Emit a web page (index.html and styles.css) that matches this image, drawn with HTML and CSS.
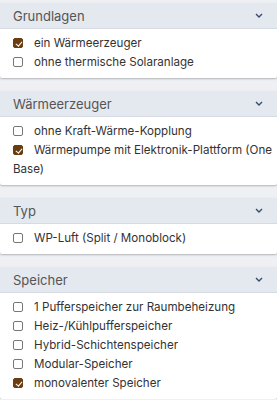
FILE: index.html
```html
<!DOCTYPE html>
<html lang="de">
<head>
<meta charset="utf-8">
<link rel="stylesheet" href="styles.css">
</head>
<body>
<div class="panel">
  <section class="card">
    <div class="card-header"><span>Grundlagen</span><svg class="chev" width="8" height="5" viewBox="0 0 8 5"><path d="M1 1l3 3 3-3" fill="none" stroke="#3a4a6a" stroke-width="1.4"/></svg></div>
    <div class="card-body">
      <label class="item"><span class="cb checked"></span><span>ein Wärmeerzeuger</span></label>
      <label class="item"><span class="cb"></span><span>ohne thermische Solaranlage</span></label>
    </div>
  </section>
  <section class="card">
    <div class="card-header"><span>Wärmeerzeuger</span><svg class="chev" width="8" height="5" viewBox="0 0 8 5"><path d="M1 1l3 3 3-3" fill="none" stroke="#3a4a6a" stroke-width="1.4"/></svg></div>
    <div class="card-body">
      <label class="item"><span class="cb"></span><span>ohne Kraft-Wärme-Kopplung</span></label>
      <label class="item wrap"><span class="cb checked"></span>Wärmepumpe mit Elektronik-Plattform (One Base)</label>
    </div>
  </section>
  <section class="card">
    <div class="card-header"><span>Typ</span><svg class="chev" width="8" height="5" viewBox="0 0 8 5"><path d="M1 1l3 3 3-3" fill="none" stroke="#3a4a6a" stroke-width="1.4"/></svg></div>
    <div class="card-body">
      <label class="item"><span class="cb"></span><span>WP-Luft (Split / Monoblock)</span></label>
    </div>
  </section>
  <section class="card">
    <div class="card-header"><span>Speicher</span><svg class="chev" width="8" height="5" viewBox="0 0 8 5"><path d="M1 1l3 3 3-3" fill="none" stroke="#3a4a6a" stroke-width="1.4"/></svg></div>
    <div class="card-body">
      <label class="item"><span class="cb"></span><span>1 Pufferspeicher zur Raumbeheizung</span></label>
      <label class="item"><span class="cb"></span><span>Heiz-/Kühlpufferspeicher</span></label>
      <label class="item"><span class="cb"></span><span>Hybrid-Schichtenspeicher</span></label>
      <label class="item"><span class="cb"></span><span>Modular-Speicher</span></label>
      <label class="item"><span class="cb checked"></span><span>monovalenter Speicher</span></label>
    </div>
  </section>
</div>
</body>
</html>
```
FILE: styles.css
```css
html, body {
  margin: 0;
  padding: 0;
  background: #eef0f4;
}
body {
  font-family: Inter, "Noto Sans", sans-serif;
  color: #333;
}
.panel {
  display: flex;
  flex-direction: column;
  gap: 13px;
  padding-top: 3px;
  width: 277px;
}
.card {
  background: #fff;
  box-shadow: 0 1px 2px rgba(0,0,0,0.25);
  border-radius: 0 0 2px 2px;
}
.card-header {
  height: 25px;
  display: flex;
  align-items: center;
  justify-content: space-between;
  padding: 0 14px 0 13px;
  background: #e4e8ef;
  border-bottom: 1px solid #d6dbe3;
  font-size: 13px;
  color: #555;
}
.card-body {
  padding: 5px 0 6px 13px;
  display: flex;
  flex-direction: column;
}
.item {
  font-size: 11.6px;
  line-height: 19px;
  color: #333;
}
.item .cb {
  display: inline-block;
  vertical-align: -1px;
  box-sizing: border-box;
  width: 10px;
  height: 10px;
  border: 1px solid #777;
  border-radius: 2px;
  margin-right: 11px;
  background: #fff;
  position: relative;
}
.item .cb.checked {
  background: #6a3d10;
  border-color: #6a3d10;
}
.item .cb.checked::after {
  content: "";
  position: absolute;
  left: 2.5px;
  top: 0.5px;
  width: 2.5px;
  height: 5px;
  border: solid #fff;
  border-width: 0 1.5px 1.5px 0;
  transform: rotate(40deg);
}
```
